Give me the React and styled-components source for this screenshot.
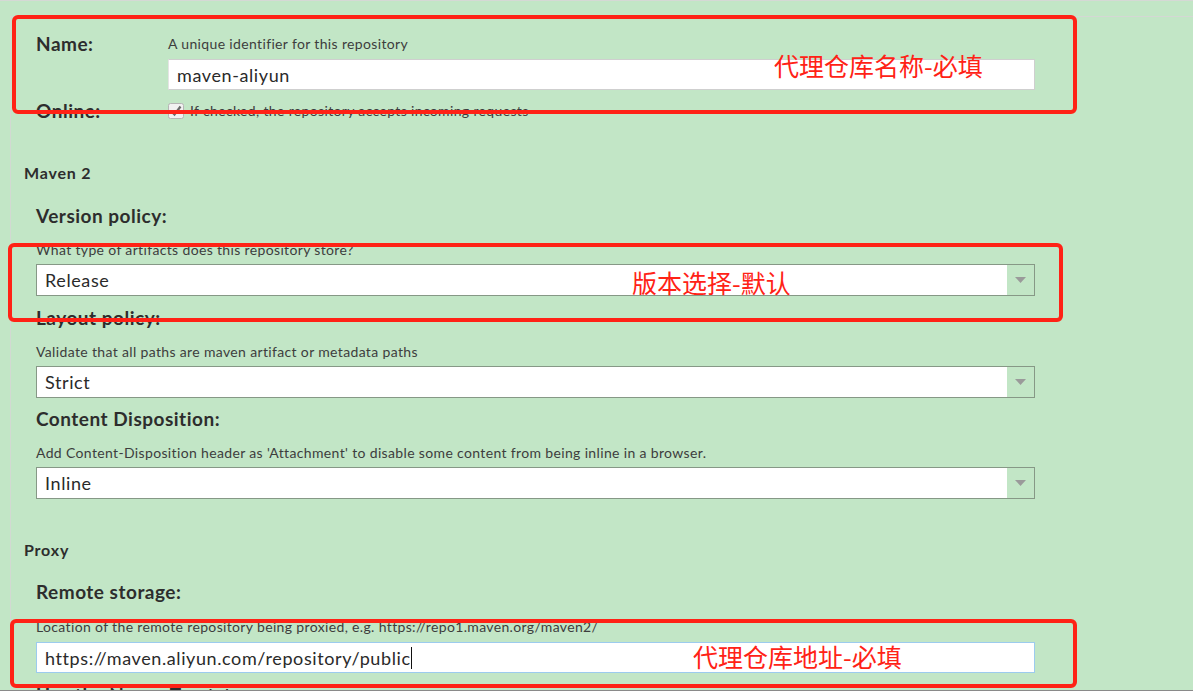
import React from "react";
import styled, { createGlobalStyle } from "styled-components";

const GlobalStyle = createGlobalStyle`
  html, body {
    margin: 0;
    padding: 0;
    background: #c2e6c6;
  }
  body {
    font-family: Lato, "Open Sans", sans-serif;
    color: #333;
  }
`;

const Page = styled.div`
  position: relative;
  width: 1193px;
  height: 691px;
  box-sizing: border-box;
  overflow: hidden;
  background: #c2e6c6;
  border-top: 1px solid #d5d9d5;
  border-bottom: 1px solid #8a8a8a;
`;

const Panel = styled.div`
  margin: 15px 0 0 10px;
  border-top: 1px solid #d4d8d4;
  border-left: 1px solid #d2d9d2;
  height: 100%;
  padding: 18px 0 0 0;
`;

const Block = styled.div`
  padding-left: 25px;
  width: 999px;
`;

const InlineRow = styled.div`
  display: grid;
  grid-template-columns: 132px 1fr;
  margin-top: ${(p) => p.$top || 0}px;
`;

const InlineLabel = styled.div`
  font-size: 19px;
  font-weight: 700;
  letter-spacing: 0.5px;
  line-height: 17px;
  color: #2d2d2d;
`;

const Help = styled.div`
  font-size: 14px;
  letter-spacing: 0.35px;
  line-height: 17px;
  color: #3d3d3d;
  white-space: nowrap;
  margin-top: ${(p) => p.$top || 0}px;
`;

const TextInput = styled.div`
  height: 31px;
  box-sizing: border-box;
  margin-top: 7px;
  background: #fff;
  border: 1px solid ${(p) => (p.$focus ? "#9ccbee" : "#cfcfcf")};
  border-left-color: ${(p) => (p.$focus ? "#9ccbee" : "#e4e4e4")};
  display: flex;
  align-items: center;
  padding-left: 8px;
  font-size: 18px;
  letter-spacing: 0.6px;
  color: #2a2a2a;
`;

const Caret = styled.span`
  display: inline-block;
  width: 1px;
  height: 22px;
  background: #111;
`;

const CheckRow = styled.div`
  display: flex;
  align-items: center;
  gap: 6px;
`;

const SectionTitle = styled.div`
  padding-left: 13px;
  font-size: 16px;
  font-weight: 700;
  letter-spacing: 0.8px;
  line-height: 20px;
  color: #2d2d2d;
  margin-top: ${(p) => p.$top}px;
`;

const FieldLabel = styled.div`
  font-size: 19px;
  font-weight: 700;
  letter-spacing: 0.5px;
  line-height: 24px;
  color: #2d2d2d;
  white-space: nowrap;
  margin-top: ${(p) => p.$top}px;
`;

const SelectBox = styled.div`
  height: 32px;
  box-sizing: border-box;
  margin-top: 6px;
  display: flex;
  border: 1px solid #869886;
  background: #fff;
`;

const SelectValue = styled.div`
  flex: 1;
  display: flex;
  align-items: center;
  padding-left: 8px;
  font-size: 18px;
  letter-spacing: 0.6px;
  color: #2a2a2a;
`;

const SelectTrigger = styled.div`
  width: 27px;
  background: #c2e6c6;
  display: flex;
  align-items: center;
  justify-content: center;
`;

const Mark = styled.div`
  position: absolute;
  left: ${(p) => p.$x}px;
  top: ${(p) => p.$y}px;
  width: ${(p) => p.$w}px;
  height: ${(p) => p.$h}px;
  box-sizing: border-box;
  border: 4px solid #ff2216;
  border-radius: 6px;
  pointer-events: none;
`;

const Note = styled.div`
  position: absolute;
  left: ${(p) => p.$x}px;
  top: ${(p) => p.$y}px;
  font-family: "Noto Sans CJK SC", sans-serif;
  font-weight: 400;
  font-size: 25px;
  line-height: 30px;
  color: #ff2216;
  white-space: nowrap;
`;

function Select({ value }) {
  return (
    <SelectBox>
      <SelectValue>{value}</SelectValue>
      <SelectTrigger>
        <svg width="11" height="6" viewBox="0 0 11 6">
          <path d="M0 0h11L5.5 6z" fill="#9a9a9a" />
        </svg>
      </SelectTrigger>
    </SelectBox>
  );
}

function CheckBox() {
  return (
    <svg width="16" height="16" viewBox="0 0 16 16">
      <rect x="0.5" y="0.5" width="15" height="15" rx="2" fill="#f1f1f1" stroke="#b5b5b5" />
      <path d="M3.5 8.5l3 3 6-8" fill="none" stroke="#6a6a6a" strokeWidth="2.2" />
    </svg>
  );
}

export default function App() {
  return (
    <>
      <GlobalStyle />
      <Page>
        <Panel>
          <Block>
            <InlineRow>
              <InlineLabel>Name:</InlineLabel>
              <div>
                <Help>A unique identifier for this repository</Help>
                <TextInput>maven-aliyun</TextInput>
              </div>
            </InlineRow>
            <InlineRow $top={12}>
              <InlineLabel>Online:</InlineLabel>
              <CheckRow>
                <CheckBox />
                <Help>If checked, the repository accepts incoming requests</Help>
              </CheckRow>
            </InlineRow>
          </Block>

          <SectionTitle $top={44}>Maven 2</SectionTitle>
          <Block>
            <FieldLabel $top={21}>Version policy:</FieldLabel>
            <Help $top={13}>What type of artifacts does this repository store?</Help>
            <Select value="Release" />

            <FieldLabel $top={10}>Layout policy:</FieldLabel>
            <Help $top={13}>Validate that all paths are maven artifact or metadata paths</Help>
            <Select value="Strict" />

            <FieldLabel $top={9}>Content Disposition:</FieldLabel>
            <Help $top={13}>
              Add Content-Disposition header as 'Attachment' to disable some content from being inline in a browser.
            </Help>
            <Select value="Inline" />
          </Block>

          <SectionTitle $top={41}>Proxy</SectionTitle>
          <Block>
            <FieldLabel $top={20}>Remote storage:</FieldLabel>
            <Help $top={14}>
              Location of the remote repository being proxied, e.g. https://repo1.maven.org/maven2/
            </Help>
            <TextInput $focus>
              https://maven.aliyun.com/repository/public
              <Caret />
            </TextInput>
            <FieldLabel $top={10}>Use the Nexus Truststore:</FieldLabel>
          </Block>
        </Panel>

        <Mark $x={12} $y={14} $w={1065} $h={99} />
        <Note $x={774} $y={49}>代理仓库名称-必填</Note>

        <Mark $x={8} $y={242} $w={1055} $h={79} />
        <Note $x={632} $y={266}>版本选择-默认</Note>

        <Mark $x={10} $y={618} $w={1067} $h={69} />
        <Note $x={693} $y={640}>代理仓库地址-必填</Note>
      </Page>
    </>
  );
}
